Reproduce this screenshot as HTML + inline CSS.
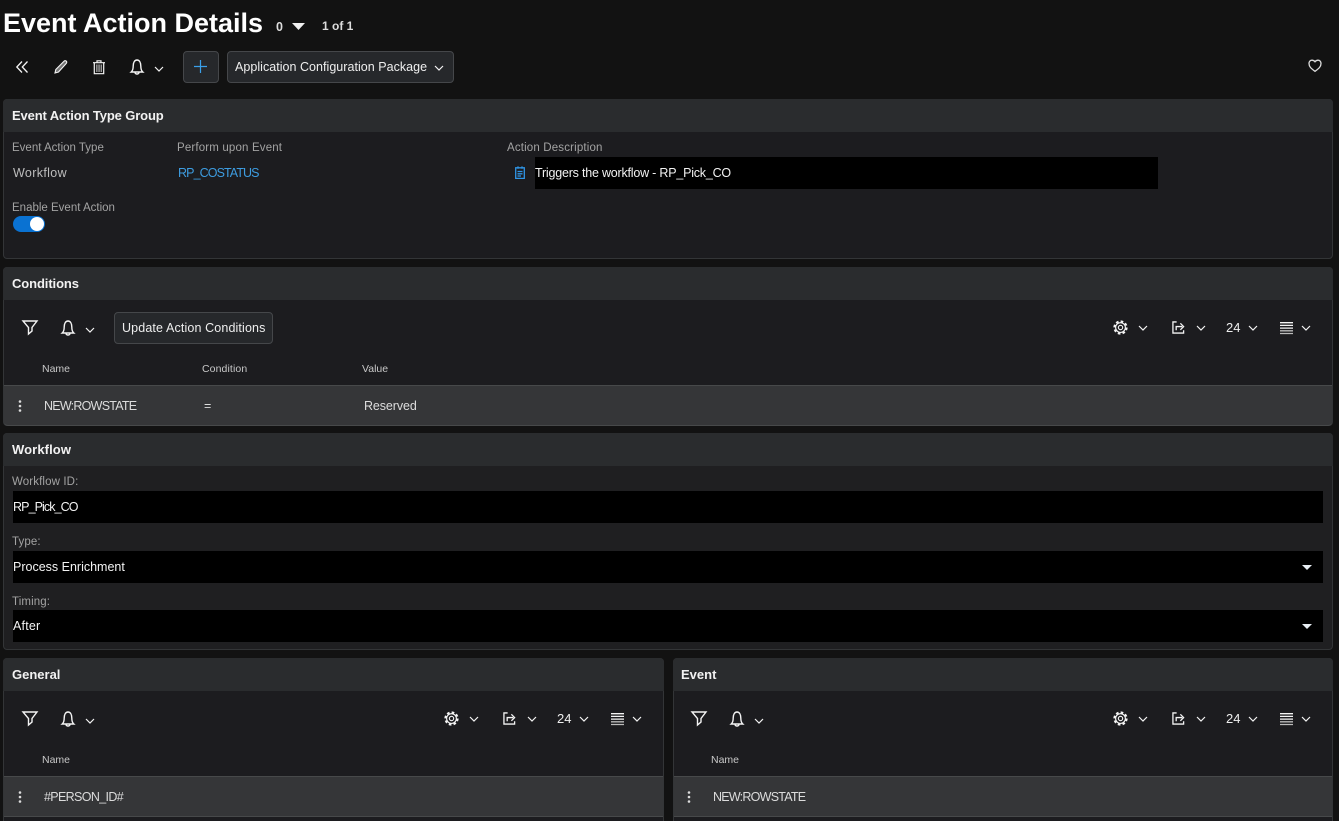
<!DOCTYPE html>
<html><head><meta charset="utf-8"><style>
html,body{margin:0;padding:0;width:1339px;height:821px;overflow:hidden;background:#121212;font-family:"Liberation Sans","Noto Sans CJK SC",sans-serif;color:#fff}
#w{position:absolute;left:0;top:0;width:1339px;height:821px;overflow:hidden;background:#121212}
.p{position:absolute;background:#1c1c1f;border:1px solid #333537;border-radius:4px;box-sizing:border-box}
.h{position:absolute;background:#2a2c2e;border-radius:4px 4px 0 0}
.t{position:absolute;white-space:nowrap;line-height:20px;height:20px}
.b{font-weight:bold;font-size:13px;color:#f2f2f2}
.l{font-size:11.5px;color:#a3a3a3}
.n{font-size:12.5px;color:#dcdcdc}
.c{font-size:10.5px;color:#c8c8c8}
.r{position:absolute;background:#353638;border-top:1px solid #47494a;border-bottom:1px solid #47494a;box-sizing:border-box}
.k{position:absolute;background:#000}
svg{position:absolute;overflow:visible;fill:none;stroke:#f4f4f4;stroke-width:1.2}
.btn{position:absolute;background:#26282b;border:1px solid #45474a;border-radius:4px;box-sizing:border-box}
</style></head><body>
<svg width="0" height="0" style="position:absolute"><defs>
<symbol id="chev" viewBox="0 0 10 6" overflow="visible"><path d="M1 1l4 4 4-4"/></symbol>
<symbol id="bell" viewBox="0 0 14 16" overflow="visible"><path style="stroke-width:1.400" d="M1.200 13c1.500-1.300 2-3 2-6C3.200 3.500 4.600 1 7 1s3.800 2.500 3.800 6c0 3 .5 4.700 2 6z"/><path style="stroke-width:1.400" d="M5 13.200c0 2.400 4 2.400 4 0"/></symbol>
<symbol id="filter" viewBox="0 0 16 15" overflow="visible"><path style="stroke-width:1.400" d="M1 1h14L10 7.500v3.500l-3.500 3V7.500z"/></symbol>
<symbol id="gear" viewBox="0 0 16 16" overflow="visible"><circle cx="8" cy="8" r="2.300"/><circle cx="8" cy="8" r="5.200"/><circle cx="8" cy="8" r="6.500" style="stroke-width:2.200" stroke-dasharray="2.800 2.300"/></symbol>
<symbol id="share" viewBox="0 0 14 14" overflow="visible"><path style="stroke-width:1.400" d="M5 1H1v12h11.500v-3"/><path style="stroke-width:1.400" d="M4.500 10V6h6.500"/><path style="stroke-width:1.400" d="M9 2.500L12.500 6 9 9.500"/></symbol>
<symbol id="lines" viewBox="0 0 13 12" overflow="visible"><path stroke-width="1.300" d="M0 .7h13M0 3.400h13M0 6.100h13"/><path stroke="#bbb" stroke-width="1.300" d="M0 8.800h13M0 11.500h13"/></symbol>
<symbol id="dots" viewBox="0 0 4 12" overflow="visible"><circle cx="2" cy="1.500" r="1.300" fill="#ddd" stroke="none"/><circle cx="2" cy="6" r="1.300" fill="#ddd" stroke="none"/><circle cx="2" cy="10.500" r="1.300" fill="#ddd" stroke="none"/></symbol>
</defs></svg>
<div id="w">
<div class="t" style="left:3px;top:8px;height:30px;line-height:30px;font-size:27px;font-weight:bold;color:#fff">Event Action Details</div>
<div class="t" style="left:276px;top:17px;font-size:12.500px;font-weight:bold;color:#ddd">0</div>
<svg style="left:292px;top:23px" width="13" height="7"><path d="M0 0h13L6.500 7z" fill="#f0f0f0" stroke="none"/></svg>
<div class="t" style="left:322px;top:16px;font-size:12px;font-weight:bold;color:#ddd">1 of 1</div>

<svg style="left:16px;top:61px" width="12" height="12"><path d="M6 .5L.8 6 6 11.500M11.500.5L6.300 6l5.200 5.500" style="stroke-width:1.300"/></svg>
<svg style="left:54px;top:60px" width="14" height="14"><path d="M1 13l.8-3.500L10 1.200c.7-.7 1.700-.7 2.300 0 .6.600.6 1.600 0 2.200L4.500 12z" fill="#777" style="stroke-width:1.100"/></svg>
<svg style="left:93px;top:60px" width="12" height="14"><path d="M0 2.700h12M4 2.700V.8h4v1.900M1.300 2.700v11h9.400v-11z" style="stroke-width:1.200"/><path d="M3.200 4.500h1.300v7.500H3.200zM5.400 4.500h1.300v7.500H5.400zM7.600 4.500h1.300v7.500H7.600z" fill="#aaa" stroke="none"/></svg>
<svg style="left:130px;top:59px" width="14" height="16"><use href="#bell"/></svg>
<svg style="left:154px;top:66px" width="10" height="6"><use href="#chev"/></svg>
<div class="btn" style="left:183px;top:51px;width:36px;height:32px"></div>
<svg style="left:194px;top:60px" width="13" height="13"><path d="M6.500 0v13M0 6.500h13" style="stroke:#3aa0ea"/></svg>
<div class="btn" style="left:227px;top:51px;width:227px;height:32px"></div>
<div class="t" style="left:235px;top:57px;font-size:12.500px;color:#eee;letter-spacing:.03px">Application Configuration Package</div>
<svg style="left:434px;top:65px" width="10" height="6"><use href="#chev"/></svg>
<svg style="left:1308px;top:59px" width="14" height="13"><path d="M7 12.300C3 9.500 1 7.500 1 4.500 1 2.500 2.400 1.200 4 1.200c1.300 0 2.300.6 3 1.600.7-1 1.700-1.600 3-1.600 1.600 0 3 1.300 3 3.300 0 3-2 5-6 7.800z" style="stroke:#ddd;stroke-width:1.300"/></svg>

<!-- Panel 1 -->
<div class="p" style="left:3px;top:99px;width:1330px;height:160px"></div>
<div class="h" style="left:3px;top:99px;width:1330px;height:33px"></div>
<div class="t b" style="left:12px;top:106px;letter-spacing:-.13px">Event Action Type Group</div>
<div class="t l" style="left:12px;top:138px">Event Action Type</div>
<div class="t l" style="left:177px;top:138px;letter-spacing:.16px">Perform upon Event</div>
<div class="t l" style="left:507px;top:138px;letter-spacing:.16px">Action Description</div>
<div class="t n" style="left:13px;top:163px;color:#bdbdbd;letter-spacing:.35px">Workflow</div>
<div class="t n" style="left:178px;top:163px;color:#3d9ce0;letter-spacing:-.9px">RP_COSTATUS</div>
<svg style="left:515px;top:166px" width="10" height="13"><path d="M.7 1.800h8.600v10.600H.7zM3 .4v2.400M7 .4v2.400M2.500 5.500h5M2.500 7.800h5M2.500 10h3.500" style="stroke:#2f95e6;stroke-width:1.300"/></svg>
<div class="k" style="left:535px;top:157px;width:623px;height:32px"></div>
<div class="t n" style="left:535px;top:163px;color:#f2f2f2;letter-spacing:-.21px">Triggers the workflow - RP_Pick_CO</div>
<div class="t l" style="left:12px;top:198px;font-size:11.500px">Enable Event Action</div>
<div style="position:absolute;left:13px;top:216px;width:32px;height:16px;border-radius:8px;background:#0a72d2"></div>
<div style="position:absolute;left:30px;top:217px;width:14px;height:14px;border-radius:7px;background:#fff"></div>

<!-- Panel 2 -->
<div class="p" style="left:3px;top:267px;width:1330px;height:159px"></div>
<div class="h" style="left:3px;top:267px;width:1330px;height:33px"></div>
<div class="t b" style="left:12px;top:274px;letter-spacing:-.1px">Conditions</div>
<svg style="left:22px;top:320px" width="16" height="15"><use href="#filter"/></svg>
<svg style="left:61px;top:320px" width="14" height="16"><use href="#bell"/></svg>
<svg style="left:85px;top:327px" width="10" height="6"><use href="#chev"/></svg>
<div class="btn" style="left:114px;top:312px;width:159px;height:32px"></div>
<div class="t" style="left:122px;top:318px;font-size:12.500px;color:#eee;letter-spacing:.13px">Update Action Conditions</div>
<svg style="left:1113px;top:320px" width="15" height="15"><use href="#gear"/></svg>
<svg style="left:1138px;top:325px" width="10" height="6"><use href="#chev"/></svg>
<svg style="left:1172px;top:321px" width="13" height="13"><use href="#share"/></svg>
<svg style="left:1196px;top:325px" width="10" height="6"><use href="#chev"/></svg>
<div class="t" style="left:1226px;top:318px;font-size:13px;color:#eee">24</div>
<svg style="left:1248px;top:325px" width="10" height="6"><use href="#chev"/></svg>
<svg style="left:1280px;top:322px" width="13" height="12"><use href="#lines"/></svg>
<svg style="left:1301px;top:325px" width="10" height="6"><use href="#chev"/></svg>
<div class="t c" style="left:42px;top:359px">Name</div>
<div class="t c" style="left:202px;top:359px;letter-spacing:.1px">Condition</div>
<div class="t c" style="left:362px;top:359px">Value</div>
<div class="r" style="left:4px;top:385px;width:1328px;height:41px;border-radius:0 0 4px 4px"></div>
<svg style="left:18px;top:400px" width="4" height="12"><use href="#dots"/></svg>
<div class="t n" style="left:44px;top:396px;letter-spacing:-.75px">NEW:ROWSTATE</div>
<div class="t n" style="left:204px;top:396px">=</div>
<div class="t n" style="left:364px;top:396px;letter-spacing:-.1px">Reserved</div>

<!-- Panel 3 -->
<div class="p" style="left:3px;top:433px;width:1330px;height:217px;background:#1f1f21"></div>
<div class="h" style="left:3px;top:433px;width:1330px;height:33px"></div>
<div class="t b" style="left:12px;top:440px;letter-spacing:.1px">Workflow</div>
<div class="t l" style="left:12px;top:472px;letter-spacing:.12px">Workflow ID:</div>
<div class="k" style="left:13px;top:491px;width:1310px;height:32px"></div>
<div class="t n" style="left:13px;top:497px;color:#f4f4f4;letter-spacing:-.9px">RP_Pick_CO</div>
<div class="t l" style="left:12px;top:532px;letter-spacing:.12px">Type:</div>
<div class="k" style="left:13px;top:551px;width:1310px;height:32px"></div>
<div class="t n" style="left:13px;top:557px;color:#f4f4f4">Process Enrichment</div>
<svg style="left:1302px;top:565px" width="10" height="5"><path d="M0 0h10L5 5z" fill="#e8eef4" stroke="none"/></svg>
<div class="t l" style="left:12px;top:592px;letter-spacing:.12px">Timing:</div>
<div class="k" style="left:13px;top:610px;width:1310px;height:32px"></div>
<div class="t n" style="left:13px;top:616px;color:#f4f4f4;letter-spacing:.2px">After</div>
<svg style="left:1302px;top:624px" width="10" height="5"><path d="M0 0h10L5 5z" fill="#e8eef4" stroke="none"/></svg>

<!-- Panel 4 -->
<div class="p" style="left:3px;top:658px;width:661px;height:170px"></div>
<div class="h" style="left:3px;top:658px;width:661px;height:33px"></div>
<div class="t b" style="left:12px;top:665px">General</div>
<svg style="left:22px;top:711px" width="16" height="15"><use href="#filter"/></svg>
<svg style="left:61px;top:711px" width="14" height="16"><use href="#bell"/></svg>
<svg style="left:85px;top:718px" width="10" height="6"><use href="#chev"/></svg>
<svg style="left:444px;top:711px" width="15" height="15"><use href="#gear"/></svg>
<svg style="left:469px;top:716px" width="10" height="6"><use href="#chev"/></svg>
<svg style="left:503px;top:712px" width="13" height="13"><use href="#share"/></svg>
<svg style="left:527px;top:716px" width="10" height="6"><use href="#chev"/></svg>
<div class="t" style="left:557px;top:709px;font-size:13px;color:#eee">24</div>
<svg style="left:579px;top:716px" width="10" height="6"><use href="#chev"/></svg>
<svg style="left:611px;top:713px" width="13" height="12"><use href="#lines"/></svg>
<svg style="left:632px;top:716px" width="10" height="6"><use href="#chev"/></svg>
<div class="t c" style="left:42px;top:750px">Name</div>
<div class="r" style="left:4px;top:776px;width:659px;height:41px"></div>
<svg style="left:18px;top:791px" width="4" height="12"><use href="#dots"/></svg>
<div class="t n" style="left:44px;top:787px;letter-spacing:-.65px">#PERSON_ID#</div>

<!-- Panel 5 -->
<div class="p" style="left:673px;top:658px;width:660px;height:170px"></div>
<div class="h" style="left:673px;top:658px;width:660px;height:33px"></div>
<div class="t b" style="left:681px;top:665px">Event</div>
<svg style="left:691px;top:711px" width="16" height="15"><use href="#filter"/></svg>
<svg style="left:730px;top:711px" width="14" height="16"><use href="#bell"/></svg>
<svg style="left:754px;top:718px" width="10" height="6"><use href="#chev"/></svg>
<svg style="left:1113px;top:711px" width="15" height="15"><use href="#gear"/></svg>
<svg style="left:1138px;top:716px" width="10" height="6"><use href="#chev"/></svg>
<svg style="left:1172px;top:712px" width="13" height="13"><use href="#share"/></svg>
<svg style="left:1196px;top:716px" width="10" height="6"><use href="#chev"/></svg>
<div class="t" style="left:1226px;top:709px;font-size:13px;color:#eee">24</div>
<svg style="left:1248px;top:716px" width="10" height="6"><use href="#chev"/></svg>
<svg style="left:1280px;top:713px" width="13" height="12"><use href="#lines"/></svg>
<svg style="left:1301px;top:716px" width="10" height="6"><use href="#chev"/></svg>
<div class="t c" style="left:711px;top:750px">Name</div>
<div class="r" style="left:674px;top:776px;width:658px;height:41px"></div>
<svg style="left:687px;top:791px" width="4" height="12"><use href="#dots"/></svg>
<div class="t n" style="left:713px;top:787px;letter-spacing:-.75px">NEW:ROWSTATE</div>
</div>
</body></html>
